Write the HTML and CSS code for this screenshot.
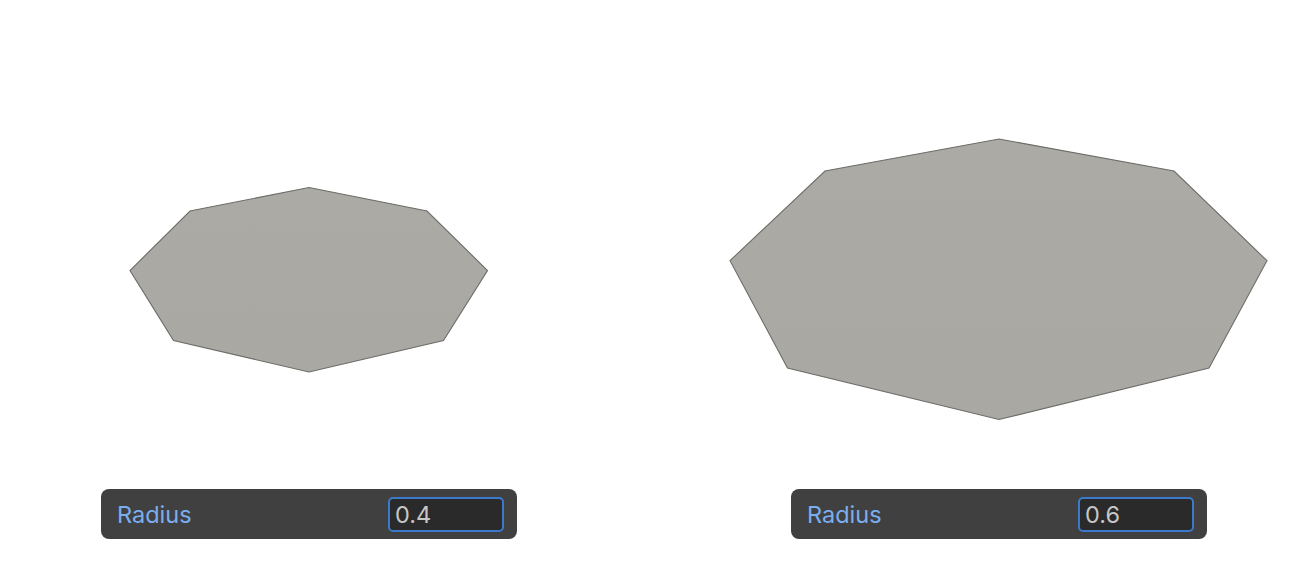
FILE: index.html
```html
<!DOCTYPE html>
<html>
<head>
<meta charset="utf-8">
<link rel="stylesheet" href="styles.css">
</head>
<body>
<div class="page">
  <div class="col">
    <svg class="stage" viewBox="0 0 560 420" width="560" height="420">
      <defs>
        <linearGradient id="g1" x1="0" y1="0" x2="0" y2="1">
          <stop offset="0" stop-color="#abaaa4"/>
          <stop offset="1" stop-color="#a9a8a3"/>
        </linearGradient>
      </defs>
      <polygon class="oct" fill="url(#g1)" points="280,118.5 398,142 458.5,201.5 414.5,271.5 280,303 144.5,271.5 101,201.5 161,142"/>
    </svg>
    <div class="panel">
      <span class="label">Radius</span>
      <span class="field">0.4</span>
    </div>
  </div>
  <div class="col">
    <svg class="stage" viewBox="0 0 560 420" width="560" height="420">
      <defs>
        <linearGradient id="g2" x1="0" y1="0" x2="0" y2="1">
          <stop offset="0" stop-color="#abaaa4"/>
          <stop offset="1" stop-color="#a9a8a3"/>
        </linearGradient>
      </defs>
      <polygon class="oct" fill="url(#g2)" points="280,70 455,102 548,191.7 490,299 280,350.5 68.5,299 11,191.7 106,102"/>
    </svg>
    <div class="panel">
      <span class="label">Radius</span>
      <span class="field">0.6</span>
    </div>
  </div>
</div>
</body>
</html>
```

FILE: styles.css
```css
html, body {
  margin: 0;
  padding: 0;
  background: #ffffff;
}
.page {
  display: flex;
  gap: 130px;
  padding: 69px 29px 0 29px;
  font-family: Inter, "Noto Sans", sans-serif;
}
.col {
  width: 560px;
  display: flex;
  flex-direction: column;
  align-items: center;
}
.stage {
  display: block;
  width: 560px;
  height: 420px;
}
.oct {
  stroke: #6c6c68;
  stroke-width: 1.1;
  stroke-linejoin: miter;
}
.panel {
  box-sizing: border-box;
  width: 416px;
  height: 50px;
  background: #404040;
  border-radius: 8px;
  display: flex;
  align-items: center;
  justify-content: space-between;
  padding: 1px 13px 0 16px;
}
.label {
  color: #7aaef0;
  font-size: 23.5px;
  line-height: 1;
}
.field {
  box-sizing: border-box;
  width: 116px;
  height: 35px;
  margin-top: -1px;
  border: 2px solid #3b7acb;
  border-radius: 5px;
  background: #2a2a2a;
  color: #c6c6c6;
  font-size: 23.5px;
  line-height: 31px;
  padding-left: 5px;
}
```
